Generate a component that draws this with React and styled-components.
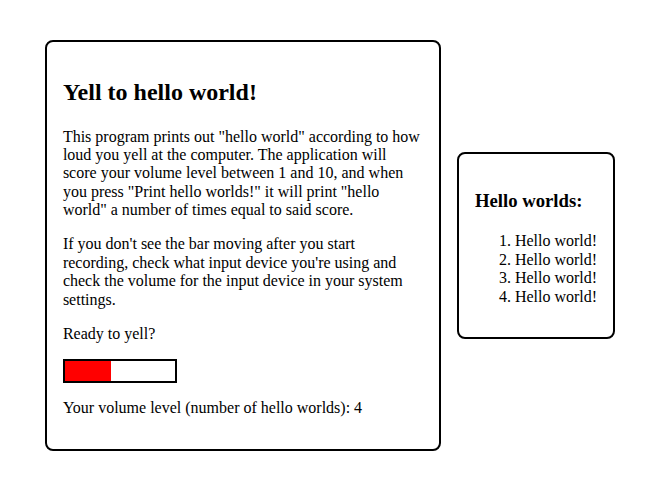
import React from 'react';
import styled, { createGlobalStyle } from 'styled-components';

const GlobalStyle = createGlobalStyle`
    body {
        margin: 0;
        font-family: "Liberation Serif", "Times New Roman", serif;
        font-size: 16px;
        color: #000;
        background: #fff;
    }
`;

const Page = styled.div`
    display: flex;
    align-items: center;
    justify-content: center;
    gap: 16px;
    padding: 40px 0;
`;

const Card = styled.div`
    border: 2px solid #000;
    border-radius: 8px;
    padding: 16px 16px 15px;
    width: ${props => props.width ? props.width + 'px' : 'auto'};
`;

const Title = styled.h2`
    font-size: 24px;
    font-weight: 700;
    line-height: 29px;
    margin: 20px 0 20.5px;
`;

const SideTitle = styled.h3`
    font-size: 18.72px;
    font-weight: 700;
    line-height: 24px;
    margin: 19px 0 19.5px;
`;

const Text = styled.p`
    margin: 16px 0;
    line-height: 1.15;
`;

const Meter = styled.div`
    width: 110px;
    height: 20px;
    border: 2px solid #000;
    background: #fff;
`;

const MeterFill = styled.div`
    height: 100%;
    background: #ff0000;
`;

const WorldList = styled.ol`
    margin: 16px 0;
    padding-left: 40px;
    line-height: 1.15;
`;

export default function App() {
    const level = 4;
    const worlds = Array.from({ length: level }, (_, i) => i);

    return (
        <>
            <GlobalStyle />
            <Page>
                <Card width={360}>
                    <Title>Yell to hello world!</Title>
                    <Text>
                        This program prints out "hello world" according to how loud you yell at the computer.
                        The application will score your volume level between 1 and 10, and when you press
                        "Print hello worlds!" it will print "hello world" a number of times equal to said score.
                    </Text>
                    <Text>
                        If you don't see the bar moving after you start recording, check what input device
                        you're using and check the volume for the input device in your system settings.
                    </Text>
                    <Text>Ready to yell?</Text>
                    <Meter>
                        <MeterFill style={{ width: `${level * 10.5}%` }} />
                    </Meter>
                    <Text>Your volume level (number of hello worlds): {level}</Text>
                </Card>
                <Card>
                    <SideTitle>Hello worlds:</SideTitle>
                    <WorldList>
                        {worlds.map(i => (
                            <li key={i}>Hello world!</li>
                        ))}
                    </WorldList>
                </Card>
            </Page>
        </>
    );
}
